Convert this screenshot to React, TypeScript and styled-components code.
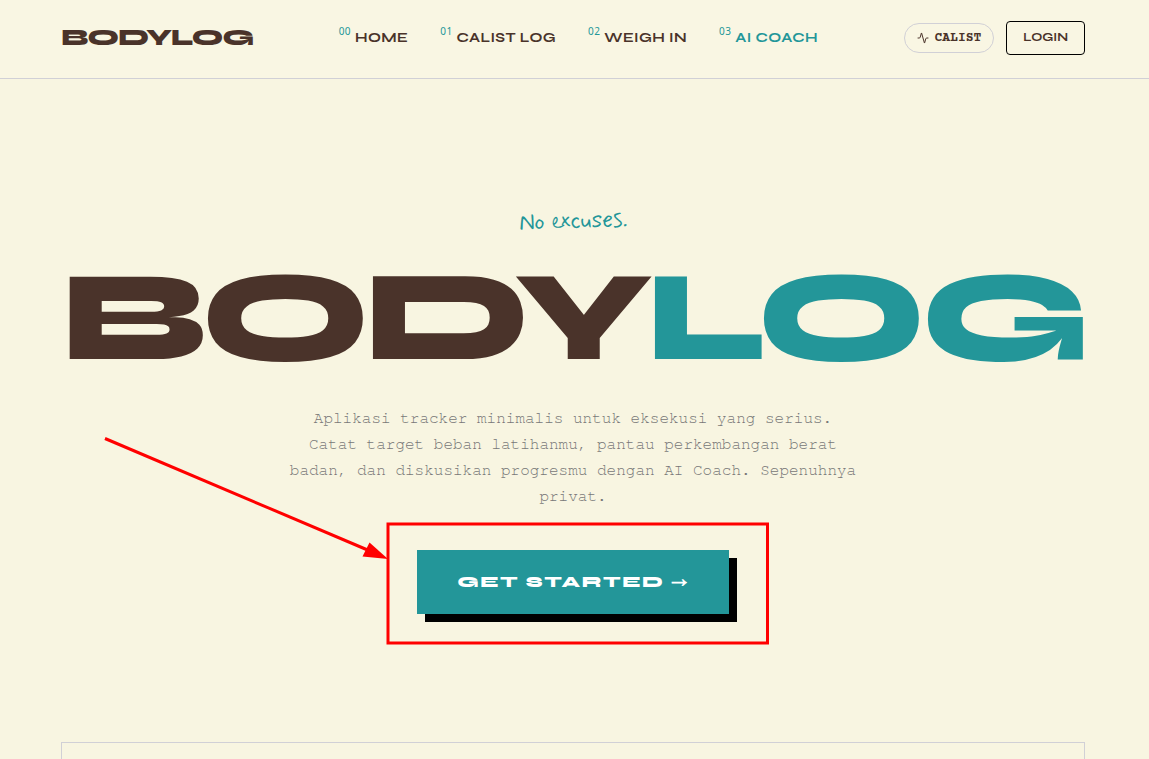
import React from "react";
import styled, { createGlobalStyle } from "styled-components";
import { Activity } from "lucide-react";

const ink = "#4a332a";
const teal = "#239699";
const line = "#d1d0d6";
const display = `Syne, "DejaVu Sans", sans-serif`;

const GlobalStyle = createGlobalStyle`
  *, *::before, *::after { box-sizing: border-box; }
  body { margin: 0; background: #f8f5e1; color: ${ink}; font-family: ${display}; }
`;

const Page = styled.div`
  min-height: 100vh;
  display: flex;
  flex-direction: column;
  overflow: hidden;
`;

const Header = styled.header`
  display: flex;
  justify-content: space-between;
  align-items: center;
  padding: 21px 64px 23px 61px;
  background: #f9f6e3;
  border-bottom: 1px solid ${line};
`;

const Logo = styled.a`
  color: ${ink};
  font-size: 24px;
  line-height: 32px;
  font-weight: 800;
  letter-spacing: -0.05em;
  text-decoration: none;
`;

const Nav = styled.nav`
  display: flex;
  justify-content: center;
  gap: 32px;
`;

const NavLink = styled.a<{ $active?: boolean }>`
  display: flex;
  align-items: flex-start;
  gap: 4px;
  color: ${(p) => (p.$active ? teal : ink)};
  font-size: 14px;
  line-height: 20px;
  font-weight: 700;
  letter-spacing: 0.03em;
  text-decoration: none;
  white-space: nowrap;
`;

const NavIndex = styled.span`
  color: ${teal};
  font-family: "Noto Sans", sans-serif;
  font-size: 10px;
  line-height: 6px;
  font-weight: 400;
`;

const Actions = styled.div`
  display: flex;
  align-items: center;
  justify-content: flex-end;
  gap: 12px;
`;

const ModeButton = styled.button`
  display: flex;
  align-items: center;
  justify-content: center;
  gap: 6px;
  height: 30px;
  padding: 0 12px;
  border: 1px solid ${line};
  border-radius: 15px;
  background: transparent;
  color: ${ink};
  font-family: "Courier Prime", "Liberation Mono", monospace;
  font-size: 13px;
  line-height: 16px;
  font-weight: 700;
`;

const LoginButton = styled.button`
  height: 34px;
  padding: 0 16px 2px;
  border: 1px solid #000;
  border-radius: 4px;
  background: transparent;
  color: ${ink};
  font-family: ${display};
  font-size: 12px;
  line-height: 16px;
  font-weight: 700;
`;

const Hero = styled.main`
  display: flex;
  flex-direction: column;
  align-items: center;
  padding: 127px 64px 128px 61px;
  text-align: center;
`;

const Tagline = styled.p`
  margin: 0;
  color: ${teal};
  font-family: Mynerve, Lato, sans-serif;
  font-size: 24px;
  line-height: 32px;
  transform: rotate(-2deg);
`;

const Title = styled.h1`
  margin: 16px 0 24px;
  font-size: 128px;
  line-height: 127px;
  font-weight: 800;
  letter-spacing: -0.05em;
  white-space: nowrap;
`;

const TitleAccent = styled.span`
  color: ${teal};
`;

const Lead = styled.p`
  max-width: 570px;
  margin: 0 0 41px;
  color: #777;
  font-family: "TeX Gyre Cursor", FreeMono, "Liberation Mono", monospace;
  font-size: 16px;
  line-height: 26px;
`;

const CtaArea = styled.div`
  position: relative;
`;

const CtaButton = styled.button`
  display: block;
  height: 64px;
  padding: 0 40px;
  border: 0;
  background: ${teal};
  box-shadow: 8px 8px 0 #000;
  color: #fff;
  font-family: ${display};
  font-size: 16px;
  line-height: 24px;
  font-weight: 800;
  letter-spacing: 0.1em;
  white-space: nowrap;
`;

const Arrow = styled.span`
  font-family: "Noto Sans Math", "Noto Sans CJK JP", sans-serif;
  font-weight: 700;
`;

const Callout = styled.svg`
  position: absolute;
  left: -317px;
  top: -120px;
  width: 680px;
  height: 220px;
  pointer-events: none;
`;

const Card = styled.section`
  flex: 1;
  min-height: 16px;
  margin: 0 64px 0 61px;
  border: 1px solid ${line};
  border-bottom: 0;
`;

const links = ["HOME", "CALIST LOG", "WEIGH IN", "AI COACH"];

export default function App() {
  return (
    <Page>
      <GlobalStyle />
      <Header>
        <Logo href="#">BODYLOG</Logo>
        <Nav aria-label="Main">
          {links.map((label, i) => (
            <NavLink key={label} href="#" $active={i === 3}>
              <NavIndex>{`0${i}`}</NavIndex>
              {label}
            </NavLink>
          ))}
        </Nav>
        <Actions>
          <ModeButton type="button">
            <Activity size={12} strokeWidth={2} aria-hidden />
            CALIST
          </ModeButton>
          <LoginButton type="button">LOGIN</LoginButton>
        </Actions>
      </Header>
      <Hero>
        <Tagline>No excuses.</Tagline>
        <Title>
          BODY<TitleAccent>LOG</TitleAccent>
        </Title>
        <Lead>
          Aplikasi tracker minimalis untuk eksekusi yang serius. Catat target
          beban latihanmu, pantau perkembangan berat badan, dan diskusikan
          progresmu dengan AI Coach. Sepenuhnya privat.
        </Lead>
        <CtaArea>
          <CtaButton type="button">
            GET STARTED <Arrow>→</Arrow>
          </CtaButton>
          <Callout viewBox="100 430 680 220" aria-hidden>
            <rect x="388" y="524" width="379.500" height="119" fill="none" stroke="#f00" strokeWidth="3" />
            <path d="M105 438.500 L370 551" stroke="#f00" strokeWidth="3" fill="none" />
            <path d="M388 559 L369.500 542.500 L362.500 556.500 Z" fill="#f00" />
          </Callout>
        </CtaArea>
      </Hero>
      <Card />
    </Page>
  );
}
